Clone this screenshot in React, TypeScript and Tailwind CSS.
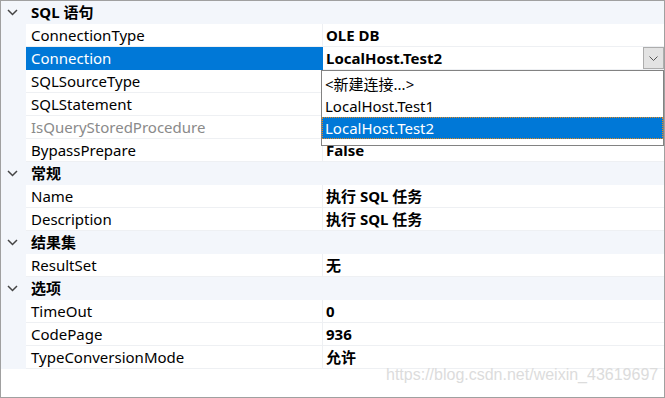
import React from "react";

type Row =
  | { kind: "cat"; title: string }
  | { kind: "prop"; name: string; value?: string; muted?: boolean; selected?: boolean; combo?: boolean };

// values of rows under the open drop-down are covered, so they are left blank
const rows: Row[] = [
  { kind: "cat", title: "SQL 语句" },
  { kind: "prop", name: "ConnectionType", value: "OLE DB" },
  { kind: "prop", name: "Connection", value: "LocalHost.Test2", selected: true, combo: true },
  { kind: "prop", name: "SQLSourceType" },
  { kind: "prop", name: "SQLStatement" },
  { kind: "prop", name: "IsQueryStoredProcedure", muted: true },
  { kind: "prop", name: "BypassPrepare", value: "False" },
  { kind: "cat", title: "常规" },
  { kind: "prop", name: "Name", value: "执行 SQL 任务" },
  { kind: "prop", name: "Description", value: "执行 SQL 任务" },
  { kind: "cat", title: "结果集" },
  { kind: "prop", name: "ResultSet", value: "无" },
  { kind: "cat", title: "选项" },
  { kind: "prop", name: "TimeOut", value: "0" },
  { kind: "prop", name: "CodePage", value: "936" },
  { kind: "prop", name: "TypeConversionMode", value: "允许" },
];

const font = { fontFamily: '"Noto Sans", "Noto Sans CJK SC", sans-serif' };

const Chevron = () => (
  <svg width="11" height="7" viewBox="0 0 11 7" className="ml-[6px]">
    <path d="M1 1 L5.5 5.5 L10 1" fill="none" stroke="#444" strokeWidth="1.5" />
  </svg>
);

const ComboArrow = () => (
  <svg width="9" height="5" viewBox="0 0 9 5">
    <path d="M0.5 0.5 L4.5 4.5 L8.5 0.5" fill="none" stroke="#555" strokeWidth="1" />
  </svg>
);

const options = ["<新建连接...>", "LocalHost.Test1", "LocalHost.Test2"];

export default function App() {
  return (
    <div
      className="relative w-[665px] h-[398px] border border-[#a0a0a0] bg-white text-[15px] text-black overflow-hidden"
      style={font}
    >
      {rows.map((r, i) =>
        r.kind === "cat" ? (
          <div key={i} className="flex items-center h-[23px] bg-[#f3f6fb]">
            <div className="w-[25px] flex items-center">
              <Chevron />
            </div>
            <span className="pl-[5px] font-bold leading-none">{r.title}</span>
          </div>
        ) : (
          <div key={i} className="flex h-[23px]">
            <div className="w-[25px] bg-[#f3f6fb]" />
            <div
              className={
                "w-[297px] flex items-center pl-[5px] border-b border-r " +
                (r.selected
                  ? "bg-[#0078d7] text-white border-[#0078d7]"
                  : "border-[#eef0f3] " + (r.muted ? "text-[#8a8a8a]" : "text-black"))
              }
            >
              <span className="leading-none">{r.name}</span>
            </div>
            <div className="flex-1 flex items-center pl-[3px] border-b border-[#eef0f3]">
              <span className="font-bold leading-none">{r.value}</span>
              {r.combo && (
                <div className="ml-auto h-[22px] w-[21px] flex items-center justify-center bg-[#e3e3e3] border border-[#adadad]">
                  <ComboArrow />
                </div>
              )}
            </div>
          </div>
        )
      )}

      <div className="absolute left-[320px] top-[69px] w-[343px] h-[76px] bg-white border border-[#828282] pt-[2px]">
        {options.map((o, i) => (
          <div
            key={o}
            className={
              "h-[22px] flex items-center " +
              (i === 2
                ? "bg-[#0078d7] text-white border border-dotted border-[#e88a1a] pl-[2px]"
                : "pl-[3px]")
            }
          >
            <span className="leading-none">{o}</span>
          </div>
        ))}
      </div>

      <div
        className="absolute left-[385px] top-[366px] text-[16px] text-[#dcdcdc] leading-none"
        style={{ fontFamily: '"Liberation Sans", Arial, sans-serif' }}
      >
        https://blog.csdn.net/weixin_43619697
      </div>
    </div>
  );
}
